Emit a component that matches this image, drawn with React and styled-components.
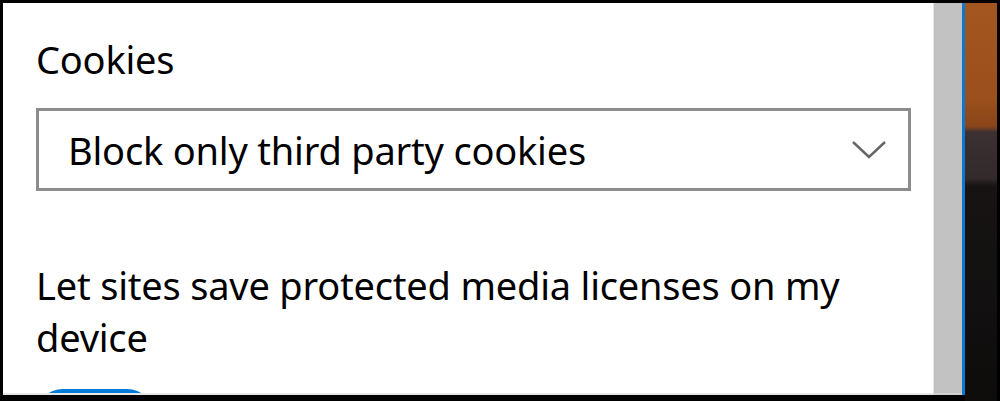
import styled, { createGlobalStyle } from "styled-components";

const GlobalStyle = createGlobalStyle`
  html, body {
    margin: 0;
    padding: 0;
    background: #000;
  }
  * {
    box-sizing: border-box;
  }
`;

const Frame = styled.div`
  display: flex;
  height: 401px;
  width: 1000px;
  padding: 3px 3px 6px 3px;
  background: #000;
  overflow: hidden;
`;

const Panel = styled.div`
  flex: 0 0 930px;
  display: flex;
  flex-direction: column;
  background: #fff;
  border-bottom: 2px solid #e6e6e6;
  padding-left: 33px;
  overflow: hidden;
  font-family: "Noto Sans", "Open Sans", sans-serif;
  color: #000;
`;

const Label = styled.div`
  flex: none;
  font-size: 38px;
  letter-spacing: -0.2px;
  line-height: 52px;
  margin-top: ${({ $top }) => $top}px;
`;

const Select = styled.div`
  flex: none;
  display: flex;
  align-items: center;
  justify-content: space-between;
  width: 875px;
  height: 83px;
  margin-top: ${({ $top }) => $top}px;
  padding: 0 22px 0 29px;
  border: 3px solid #8c8c8c;
  font-size: 38px;
  letter-spacing: -0.2px;
  line-height: 52px;
`;

const Chevron = styled.svg`
  width: 34px;
  height: 18px;
  flex: none;
`;

const Toggle = styled.div`
  flex: none;
  width: 118px;
  height: 54px;
  border-radius: 27px;
  background: #0078d7;
  margin-top: ${({ $top }) => $top}px;
`;

const Scrollbar = styled.div`
  flex: 0 0 29px;
  background: #c2c2c2;
  border-left: 1px solid #e4e4e4;
  border-bottom: 2px solid #cfcfcf;
`;

const Accent = styled.div`
  flex: 0 0 3px;
  background: #0a78d2;
`;

const Backdrop = styled.div`
  flex: 1;
  margin-bottom: -6px;
  background: linear-gradient(
    180deg,
    #a4561f 0%,
    #9b4f1c 24%,
    #8a4519 31%,
    #3b3032 32.5%,
    #332a2b 44%,
    #161312 46%,
    #121010 75%,
    #0d0c0b 100%
  );
`;

export default function App() {
  return (
    <>
      <GlobalStyle />
      <Frame>
        <Panel>
          <Label $top={30}>Cookies</Label>
          <Select $top={23}>
            <span>Block only third party cookies</span>
            <Chevron viewBox="0 0 34 18">
              <path d="M1 1 L17 16 L33 1" fill="none" stroke="#666" strokeWidth="2.4" />
            </Chevron>
          </Select>
          <Label $top={68}>
            Let sites save protected media licenses on my
            <br />
            device
          </Label>
          <Toggle $top={26} />
        </Panel>
        <Scrollbar />
        <Accent />
        <Backdrop />
      </Frame>
    </>
  );
}
